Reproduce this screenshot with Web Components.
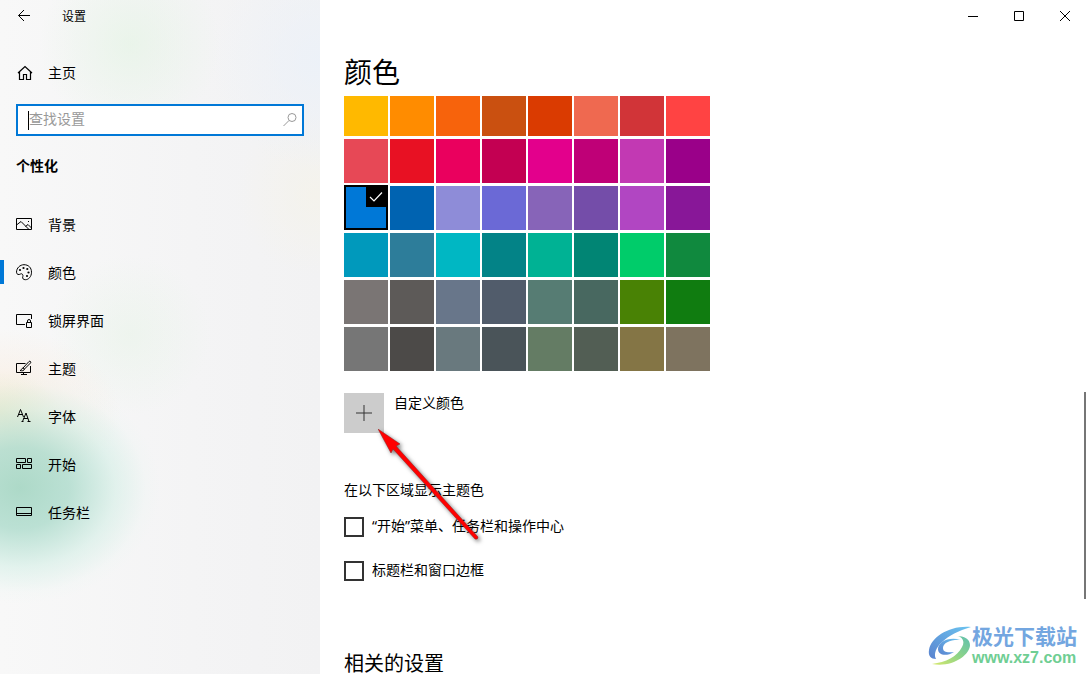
<!DOCTYPE html>
<html lang="zh-CN">
<head>
<meta charset="utf-8">
<title>设置</title>
<style>
  body { margin: 0; background: #fff; color: #000; font-family: "Noto Sans", "Noto Sans CJK SC", sans-serif; font-size: 14px; line-height: 20px; }
</style>
</head>
<body>
<settings-window>
  <side-pane slot="side"></side-pane>
  <caption-buttons slot="main"></caption-buttons>
  <color-page slot="main"></color-page>
  <site-mark slot="over"></site-mark>
</settings-window>
<script>
const define = (name, html, setup) => customElements.define(name, class extends HTMLElement {
  constructor() {
    super();
    this.attachShadow({ mode: "open" }).innerHTML = html;
  }
  connectedCallback() { if (setup) setup.call(this, this.shadowRoot); }
});

const ICONS = {
  back: '<path d="M14 8.500H2.500M8 3 2.500 8.500 8 14"/>',
  home: '<path stroke-width="1.200" d="M2 9 9 2.500 16 9M3.500 8V15.500H7.500V10.500H10.500V15.500H14.500V8"/>',
  picture: '<path d="M.5 2.500h15v11H.5zM.5 9 5 5.500 12.500 13M9.500 10.500 12 8.500 15.500 12"/><path d="M12.500 5v1"/>',
  palette: '<path d="M8 .7C12.500.7 15.500 3.700 15.500 8.200S12.500 15.700 9.500 15.700C7.500 15.700 6 14.500 6.800 12.700 7.500 11 6 9 4.500 10 3 11 .5 10.700.5 8.200.5 4 4 .7 8 .7Z"/><g fill="currentColor" stroke="none"><circle cx="4" cy="6" r="1.100"/><circle cx="7.500" cy="4" r="1.100"/><circle cx="11.300" cy="5" r="1.100"/><circle cx="12.500" cy="8.500" r="1.100"/><circle cx="11" cy="12" r="1.100"/></g>',
  lock: '<path d="M15.500 7V2.500H.5v10H9M10.500 10.500h5v5h-5zM11.500 10.500V9a1.500 1.500 0 0 1 3 0V10.500"/>',
  theme: '<path d="M9.500 3.500H.5v9h14V6M5 14.500h6M7.500 12.500v2M4 10.500C6 10.500 5 8.500 7 8L13 1.500C14 .5 15.500 2 14.500 3L8.500 9C8 11 6 11 4 10.500ZM7 8 8.500 9"/>',
  font: '<path d="M1.500 9 4.500 1.500 7.500 9M2.500 6.500h4M6.500 13.500 10 5 13 13.500M7.500 10.500H12M5.500 13.500h2M11.500 13.500h3"/>',
  start: '<path d="M.5 2.500h9v4h-9zM11.500 2.500h4v4h-4zM.5 8.500h4v4h-4zM6.500 8.500h9v4h-9z"/>',
  taskbar: '<path d="M.5 3.500h15v8H.5zM.5 9.500h15"/>',
  search: '<circle cx="10" cy="6.500" r="4"/><path d="M7 9.500 1.500 15"/>'
};

define("line-icon", `
  <style>
    :host { display: block; flex: none; width: 17px; height: 18px; }
    svg { display: block; width: 17px; height: 18px; fill: none; stroke: currentColor; }
  </style>
  <svg viewBox="0 0 17 18" aria-hidden="true"></svg>`,
  function (root) { root.querySelector("svg").innerHTML = ICONS[this.getAttribute("name")]; });

define("nav-item", `
  <style>
    :host { display: block; }
    a { display: flex; align-items: center; gap: 15px; height: 48px; padding-left: 16px; color: inherit; text-decoration: none; position: relative; box-sizing: border-box; }
    :host([selected]) a::before { content: ""; position: absolute; left: 0; top: 11px; width: 4px; height: 24px; background: #0078d7; }
  </style>
  <a href="#"><line-icon></line-icon><slot></slot></a>`,
  function (root) {
    const icon = document.createElement("line-icon");
    icon.setAttribute("name", this.getAttribute("icon"));
    root.querySelector("line-icon").replaceWith(icon);
    if (this.hasAttribute("selected")) root.querySelector("a").setAttribute("aria-current", "page");
  });
</script>
<script>
define("search-box", `
  <style>
    :host { display: block; }
    label { display: flex; align-items: center; height: 32px; box-sizing: border-box; border: 2px solid #0078d7; background: #fff; padding: 0 3px 0 10px; color: #999; }
    i { width: 1px; height: 19px; background: #000; flex: none; }
    input { flex: 1; min-width: 0; border: 0; padding: 0 0 2px; outline: 0; background: none; font: inherit; height: 20px; }
    input::placeholder { color: #999; opacity: 1; }
  </style>
  <label><i></i><input type="text" placeholder="查找设置" aria-label="查找设置"><line-icon name="search"></line-icon></label>`);

define("side-pane", `
  <style>
    :host { display: block; box-sizing: border-box; height: 100%; background:
      radial-gradient(ellipse 140px 116px at 20px 488px, rgba(165,214,195,.9), rgba(170,218,202,.78) 35%, rgba(200,236,224,.45) 68%, rgba(225,245,238,.12) 90%, rgba(240,248,245,0)),
      radial-gradient(ellipse 120px 84px at 0 412px, rgba(240,226,186,.7), rgba(250,232,214,.35) 50%, rgba(250,240,230,0)),
      radial-gradient(circle 90px at 130px 44px, rgba(226,243,226,.6), rgba(240,246,240,0)),
      radial-gradient(circle 80px at 130px 335px, rgba(226,243,226,.4), rgba(240,246,240,0)),
      radial-gradient(circle 110px at 320px 60px, rgba(235,241,249,.8), rgba(242,244,248,0)),
      radial-gradient(circle 80px at 315px 195px, rgba(245,243,233,.7), rgba(244,244,240,0)),
      linear-gradient(90deg, #f8f8f8, #f4f4f5 60%, #f2f2f3); }
    header { display: flex; align-items: center; gap: 29px; height: 32px; padding-left: 16px; font-size: 12px; line-height: 18px; }
    header span { padding-top: 2px; }
    button { border: 0; padding: 0; background: none; color: inherit; }
    .home { padding-top: 17px; }
    search-box { margin: 7px 16px 0; }
    h2 { margin: 20px 16px 25px; font-size: 14px; line-height: 20px; font-weight: 700; }
  </style>
  <header><button aria-label="返回"><line-icon name="back"></line-icon></button><span>设置</span></header>
  <div class="home"><nav-item icon="home">主页</nav-item></div>
  <search-box></search-box>
  <h2>个性化</h2>
  <nav>
    <nav-item icon="picture">背景</nav-item>
    <nav-item icon="palette" selected>颜色</nav-item>
    <nav-item icon="lock">锁屏界面</nav-item>
    <nav-item icon="theme">主题</nav-item>
    <nav-item icon="font">字体</nav-item>
    <nav-item icon="start">开始</nav-item>
    <nav-item icon="taskbar">任务栏</nav-item>
  </nav>`);

define("caption-buttons", `
  <style>
    :host { display: flex; justify-content: flex-end; height: 32px; }
    button { width: 46px; border: 0; padding: 0; background: none; display: grid; place-items: center; }
    svg { width: 11px; height: 11px; fill: none; stroke: #000; }
  </style>
  <button aria-label="最小化"><svg><path d="M0 5.500h10"/></svg></button>
  <button aria-label="最大化"><svg><path d="M.5.5h9v9h-9z"/></svg></button>
  <button aria-label="关闭"><svg><path d="M0 0l10 10M10 0 0 10"/></svg></button>`);

define("color-grid", `
  <style>
    :host { display: grid; grid-template-columns: repeat(8, 44px); grid-template-rows: 40px; grid-auto-rows: 44px; gap: 3px 2px; }
    button { border: 0; padding: 0; position: relative; }
    [aria-pressed=true] { border: 2px solid #000; margin-top: -1px; }
    svg { position: absolute; top: 0; right: 0; width: 20px; height: 20px; background: #000; fill: none; stroke: #fff; stroke-width: 1.200; }
  </style>`,
  function (root) {
    const colors = "ffb900 ff8c00 f7630c ca5010 da3b01 ef6950 d13438 ff4343 e74856 e81123 ea005e c30052 e3008c bf0077 c239b3 9a0089 0078d7 0063b1 8e8cd8 6b69d6 8764b8 744da9 b146c2 881798 0099bc 2d7d9a 00b7c3 038387 00b294 018574 00cc6a 10893e 7a7574 5d5a58 68768a 515c6b 567c73 486860 498205 107c10 767676 4c4a48 69797e 4a5459 647c64 525e54 847545 7e735f".split(" ");
    for (const color of colors) {
      const button = document.createElement("button");
      button.style.backgroundColor = "#" + color;
      button.setAttribute("aria-label", "#" + color);
      button.setAttribute("aria-pressed", color === "0078d7");
      if (color === "0078d7") button.innerHTML = '<svg viewBox="0 0 20 20"><path d="M4 10l4 4 8-8.500"/></svg>';
      root.append(button);
    }
  });

define("check-option", `
  <style>
    :host { display: block; }
    label { display: flex; align-items: flex-start; gap: 8px; height: 20px; line-height: 18px; }
    input { appearance: none; flex: none; box-sizing: border-box; width: 20px; height: 20px; margin: 0; border: 2px solid #333; background: #fff; }
  </style>
  <label><input type="checkbox"><span><slot></slot></span></label>`);

define("pointer-arrow", `
  <style>
    :host { display: block; pointer-events: none; }
    svg { display: block; width: 110px; height: 122px; filter: drop-shadow(2px 2px 2px rgba(0,0,0,.55)); }
  </style>
  <svg viewBox="0 0 110 122" aria-hidden="true"><path d="M0 0 22 15 18 17 100 108Q100 111 97 110L15 20 13 24Z" fill="#f00" stroke="#8c2020" stroke-width=".5"/></svg>`);

define("color-page", `
  <style>
    :host { display: block; padding: 20px 24px 0; }
    h1 { margin: 0; font-size: 28px; line-height: 40px; font-weight: 400; }
    color-grid { margin-top: 4px; }
    .custom { display: flex; align-items: flex-start; gap: 10px; margin-top: 22px; position: relative; }
    .custom button { width: 40px; height: 40px; padding: 0; border: 0; background: #ccc; display: grid; place-items: center; }
    .custom svg { width: 16px; height: 16px; stroke: #333; }
    pointer-arrow { position: absolute; left: 34px; top: 36px; z-index: 1; }
    h3 { margin: 47px 0 17px; font-size: 14px; line-height: 20px; font-weight: 400; }
    check-option { margin-bottom: 24px; }
    h2 { margin: 73px 0 0; font-size: 20px; line-height: 20px; font-weight: 400; }
  </style>
  <h1>颜色</h1>
  <color-grid></color-grid>
  <div class="custom">
    <button id="add" aria-label="自定义颜色"><svg viewBox="0 0 16 16"><path d="M8 0v16M0 8h16"/></svg></button>
    <label for="add">自定义颜色</label>
    <pointer-arrow></pointer-arrow>
  </div>
  <h3>在以下区域显示主题色</h3>
  <check-option>“开始”菜单、任务栏和操作中心</check-option>
  <check-option>标题栏和窗口边框</check-option>
  <h2>相关的设置</h2>`);

define("site-mark", `
  <style>
    :host { display: flex; align-items: center; }
    svg { width: 44px; height: 42px; }
    strong { display: block; font-size: 21px; line-height: 24px; color: #73a6e0; }
    span { display: block; font: 700 16px/20px "Liberation Sans", sans-serif; color: #6fce93; }
  </style>
  <svg viewBox="0 0 44 42" aria-hidden="true">
    <defs><linearGradient id="b" x1="0" y1="1" x2="1" y2="0"><stop stop-color="#5a83cf"/><stop offset="1" stop-color="#6bc4f0"/></linearGradient>
    <linearGradient id="g" x1="0" y1="1" x2="1" y2="0"><stop stop-color="#d8e86c"/><stop offset=".5" stop-color="#8ed487"/><stop offset="1" stop-color="#5fc0b0"/></linearGradient></defs>
    <path fill="url(#b)" d="M43 2C22 0 3 12 1 25c-1 6 2 9 7 9C3 24 18 9 43 2Z"/>
    <path fill="url(#b)" d="M33 15C21 11 10 17 10 24c0 6 8 8 16 3-7 1-11 0-11-4 0-5 8-9 18-8Z"/>
    <path fill="url(#g)" d="M29 11C35 12 37 17 34 22 29 32 18 37 4 39 24 43 42 30 42 20 42 14 36 11 29 11Z"/>
  </svg>
  <div><strong>极光下载站</strong><span>www.xz7.com</span></div>`);

define("settings-window", `
  <style>
    :host { display: grid; grid-template-columns: 320px 1fr; height: 100vh; overflow: hidden; position: relative; }
    main { min-width: 0; overflow: hidden; position: relative; }
    .thumb { position: absolute; right: 2px; top: 392px; width: 2px; height: 207px; background: #767676; }
    ::slotted([slot=over]) { position: absolute; right: 11px; bottom: 6px; }
  </style>
  <aside><slot name="side"></slot></aside>
  <main><slot name="main"></slot><div class="thumb"></div></main>
  <slot name="over"></slot>`);
</script>
</body>
</html>
